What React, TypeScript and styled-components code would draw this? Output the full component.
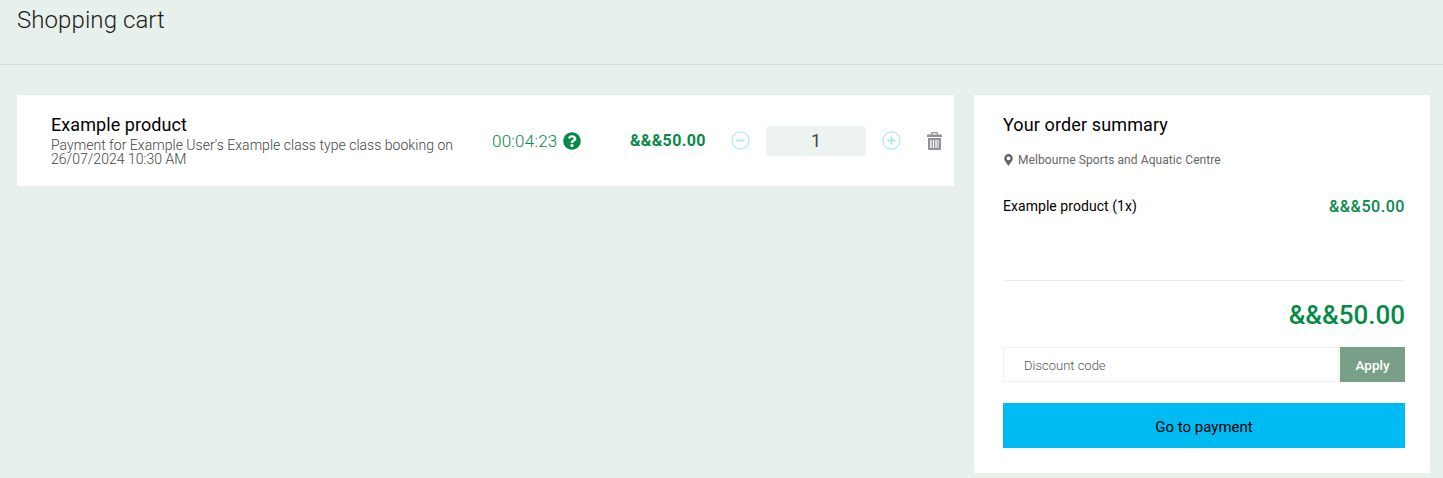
import styled, { createGlobalStyle } from 'styled-components';
import { FaQuestionCircle } from 'react-icons/fa';

const GlobalStyle = createGlobalStyle`
  html, body {
    margin: 0;
    padding: 0;
    background: #e7f0eb;
    font-family: Roboto, "Liberation Sans", sans-serif;
  }
`;

const GREEN = '#068a48';

const App = () => (
  <>
    <GlobalStyle />
    <Page>
      <Header>
        <Title>Shopping cart</Title>
      </Header>
      <Content>
        <CartCard>
          <ProductInfo>
            <ProductName>Example product</ProductName>
            <ProductDescription>Payment for Example User's Example class type class booking on 26/07/2024 10:30 AM</ProductDescription>
          </ProductInfo>
          <Timer>
            <TimerText>00:04:23</TimerText>
            <FaQuestionCircle size={18} color={GREEN} />
          </Timer>
          <ItemPrice>&&&50.00</ItemPrice>
          <Stepper>
            <RoundButton>
              <svg width="19" height="19" viewBox="0 0 19 19" fill="none" stroke="#aee6fb">
                <circle cx="9.5" cy="9.5" r="8.6" strokeWidth="1.2" />
                <path d="M5.5 9.5h8" strokeWidth="2" />
              </svg>
            </RoundButton>
            <Quantity>1</Quantity>
            <RoundButton>
              <svg width="19" height="19" viewBox="0 0 19 19" fill="none" stroke="#aee6fb">
                <circle cx="9.5" cy="9.5" r="8.6" strokeWidth="1.2" />
                <path d="M5.5 9.5h8M9.5 5.5v8" strokeWidth="2" />
              </svg>
            </RoundButton>
          </Stepper>
          <TrashButton>
            <svg width="15" height="18" viewBox="0 0 15 18" fill="#929397">
              <path d="M5 0h5a1 1 0 0 1 1 1v1.5h3.2a.8.8 0 0 1 .8.8V5H0V3.300a.8.8 0 0 1 .8-.8H4V1a1 1 0 0 1 1-1zm.2 1.200v1.300h4.600V1.200z" fillRule="evenodd" />
              <path d="M1 6h13v11a1 1 0 0 1-1 1H2a1 1 0 0 1-1-1zm2.200 2v8h1.300V8zm2.600 0v8h1.300V8zm2.600 0v8h1.300V8zm2.300 0v8h.9V8z" fillRule="evenodd" />
            </svg>
          </TrashButton>
        </CartCard>
        <SummaryCard>
          <SummaryTitle>Your order summary</SummaryTitle>
          <Location>
            <svg width="9" height="12" viewBox="0 0 9 12" fill="#666">
              <path d="M4.500 0A4.300 4.300 0 0 0 .2 4.300C.2 7 3.200 10 4.500 12c1.300-2 4.300-5 4.300-7.700A4.300 4.300 0 0 0 4.500 0zm0 2.400a1.900 1.900 0 1 1 0 3.800 1.900 1.900 0 0 1 0-3.800z" fillRule="evenodd" />
            </svg>
            Melbourne Sports and Aquatic Centre
          </Location>
          <SummaryRow>
            <SummaryItem>Example product (1x)</SummaryItem>
            <SummaryPrice>&&&50.00</SummaryPrice>
          </SummaryRow>
          <Divider />
          <Total>&&&50.00</Total>
          <DiscountRow>
            <DiscountInput placeholder="Discount code" />
            <ApplyButton>Apply</ApplyButton>
          </DiscountRow>
          <PayButton>Go to payment</PayButton>
        </SummaryCard>
      </Content>
    </Page>
  </>
);

export default App;

const Page = styled.div`
  width: 1443px;
  height: 478px;
  overflow: hidden;
  background: #e7f0eb;
`;

const Header = styled.header`
  height: 64px;
  padding-left: 17px;
  border-bottom: 1px solid #d4dfda;
`;

const Title = styled.h1`
  margin: 0;
  padding-top: 6px;
  font-size: 24px;
  line-height: 28px;
  font-weight: 300;
  letter-spacing: 0.08px;
  color: #1c1c1c;
`;

const Content = styled.main`
  display: flex;
  align-items: flex-start;
  gap: 20px;
  padding: 30px 13px 0 17px;
`;

const CartCard = styled.section`
  width: 937px;
  height: 91px;
  flex: none;
  display: flex;
  align-items: center;
  background: #fff;
  padding-left: 34px;
  box-sizing: border-box;
`;

const ProductInfo = styled.div`
  width: 405px;
  flex: none;
  margin-top: 1px;
`;

const ProductName = styled.div`
  font-size: 18px;
  line-height: 18px;
  letter-spacing: 0.07px;
  color: #000;
`;

const ProductDescription = styled.div`
  margin-top: 4px;
  font-size: 14px;
  line-height: 14px;
  font-weight: 300;
  letter-spacing: 0.03px;
  color: #444;
`;

const Timer = styled.div`
  margin-left: 36px;
  width: 138px;
  flex: none;
  display: flex;
  align-items: center;
  gap: 6px;
`;

const TimerText = styled.span`
  font-size: 17px;
  font-weight: 300;
  letter-spacing: 0.22px;
  color: ${GREEN};
`;

const ItemPrice = styled.div`
  width: 101px;
  flex: none;
  font-size: 16px;
  font-weight: 700;
  letter-spacing: 0.35px;
  color: ${GREEN};
`;

const Stepper = styled.div`
  display: flex;
  align-items: center;
  gap: 16px;
`;

const RoundButton = styled.button`
  display: flex;
  width: 19px;
  height: 19px;
  padding: 0;
  border: 0;
  background: none;
`;

const Quantity = styled.div`
  width: 100px;
  height: 30px;
  border-radius: 3px;
  background: #edf3f1;
  color: #444;
  font-size: 18px;
  line-height: 30px;
  text-align: center;
`;

const TrashButton = styled.button`
  display: flex;
  margin-left: 26px;
  padding: 0;
  border: 0;
  background: none;
`;

const SummaryCard = styled.aside`
  width: 456px;
  height: 378px;
  flex: none;
  box-sizing: border-box;
  padding: 19px 25px 0 29px;
  background: #fff;
`;

const SummaryTitle = styled.h2`
  margin: 0;
  font-size: 18px;
  line-height: 21px;
  font-weight: 400;
  letter-spacing: 0.12px;
  color: #000;
`;

const Location = styled.div`
  display: flex;
  align-items: center;
  gap: 5px;
  margin-top: 18px;
  padding-left: 1px;
  font-size: 12px;
  line-height: 14px;
  letter-spacing: 0.08px;
  color: #666;
`;

const SummaryRow = styled.div`
  display: flex;
  justify-content: space-between;
  align-items: center;
  margin-top: 29px;
  height: 20px;
`;

const SummaryItem = styled.span`
  font-size: 14px;
  letter-spacing: 0.05px;
  color: #000;
`;

const SummaryPrice = styled.span`
  font-size: 16px;
  font-weight: 500;
  letter-spacing: 0.55px;
  color: ${GREEN};
`;

const Divider = styled.hr`
  margin: 64px 0 0;
  border: 0;
  border-top: 1px solid #e7f0eb;
`;

const Total = styled.div`
  margin-top: 19px;
  text-align: right;
  font-size: 26px;
  line-height: 30px;
  font-weight: 500;
  color: ${GREEN};
`;

const DiscountRow = styled.div`
  display: flex;
  gap: 1px;
  margin-top: 17px;
`;

const DiscountInput = styled.input`
  flex: 1;
  min-width: 0;
  height: 35px;
  box-sizing: border-box;
  padding: 1px 20px 0;
  border: 1px solid #edf3f1;
  outline: none;
  font-family: inherit;
  font-size: 13px;
  font-weight: 300;
  &::placeholder {
    color: #555;
    opacity: 1;
  }
`;

const ApplyButton = styled.button`
  width: 65px;
  height: 35px;
  flex: none;
  border: 0;
  padding: 0;
  background: #7a9f89;
  color: #fff;
  font-family: inherit;
  font-size: 13.5px;
  font-weight: 500;
`;

const PayButton = styled.button`
  display: block;
  width: 100%;
  height: 45px;
  margin-top: 21px;
  border: 0;
  padding: 2px 0 0;
  background: #00baf2;
  color: #000;
  font-family: inherit;
  font-size: 15px;
  font-weight: 400;
`;
